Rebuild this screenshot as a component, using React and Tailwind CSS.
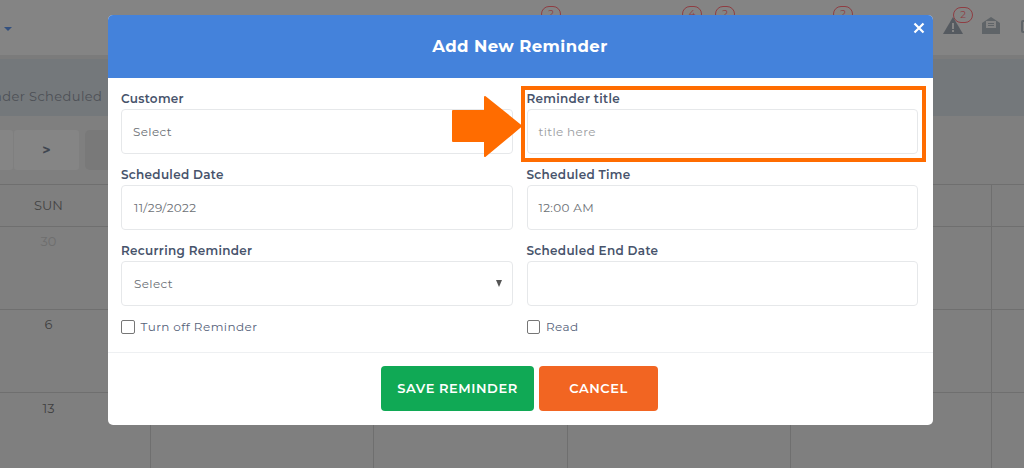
const font = { fontFamily: "Montserrat, Inter, 'Noto Sans', sans-serif" };

const Badge = ({ className, n }) => (
  <span
    className={`absolute w-[20px] h-[16px] rounded-full border border-[#8f3d42] text-[10px] leading-[14px] text-center text-[#8f3d42] ${className}`}
  >
    {n}
  </span>
);

const Field = ({ label, value, placeholder, caret, inset }) => (
  <div className="flex flex-col">
    <label className="text-[12px] leading-[16px] h-[16px] mt-[1px] font-semibold tracking-[0.3px] text-[#47536b] mb-[2px]">{label}</label>
    <div className={`relative h-[45px] border border-[#e6e8ea] rounded-[4px] bg-white flex items-center pr-[11px] text-[12px] tracking-[0.35px] text-[#6b6f75] ${inset ? "pl-[12px]" : "pl-[11px]"}`}>
      {placeholder ? <span className="text-[#9a9da1]">{placeholder}</span> : value}
      {caret && <span className="absolute right-[10px] top-[18px] w-0 h-0 border-x-[3.5px] border-x-transparent border-t-[7px] border-t-[#555]" />}
    </div>
  </div>
);

const Check = ({ label }) => (
  <div className="flex items-center gap-[6px] h-[14px] mt-[2px] text-[12px] tracking-[0.42px] text-[#56627a]">
    <span className="w-[13.5px] h-[14px] border border-[#767676] rounded-[2px] bg-white" />
    {label}
  </div>
);

const Row = ({ className, children }) => (
  <div className={`grid grid-cols-[151px_223px_194px_223px_201px_32px] border-b border-[#6f6f6f] text-[13px] ${className}`}>
    {children}
    <div className="border-r border-[#6f6f6f]" />
    <div className="border-r border-[#6f6f6f]" />
    <div className="border-r border-[#6f6f6f]" />
    <div className="border-r border-[#6f6f6f]" />
    <div />
  </div>
);

export default function App() {
  return (
    <div className="relative w-[1024px] h-[468px] overflow-hidden bg-[#7f7f7f]" style={font}>
      {/* page behind the modal */}
      <div className="relative h-[59px] bg-[#848484] border-b-[4px] border-[#7b7b7b]">
        <span className="absolute left-[4px] top-[27px] w-0 h-0 border-x-[4px] border-x-transparent border-t-[4px] border-t-[#33507f]" />
        <Badge className="left-[541px] top-[6px]" n="2" />
        <Badge className="left-[682px] top-[6px]" n="4" />
        <Badge className="left-[715px] top-[6px]" n="2" />
        <Badge className="left-[833px] top-[6px]" n="2" />
        <Badge className="left-[953px] top-[7px]" n="2" />
        <svg className="absolute left-[943px] top-[17px]" width="20" height="17" viewBox="0 0 20 17">
          <path d="M10 0 L20 17 H0 Z" fill="#555a60" />
          <rect x="9" y="6" width="2" height="6" fill="#848484" />
          <rect x="9" y="13" width="2" height="2" fill="#848484" />
        </svg>
        <svg className="absolute left-[982px] top-[17px]" width="18" height="17" viewBox="0 0 18 17">
          <path d="M0 6 L9 0 L18 6 V17 H0 Z" fill="#5f6468" />
          <rect x="4" y="4" width="10" height="7" fill="#848484" />
          <rect x="6" y="6" width="6" height="1" fill="#5f6468" />
          <rect x="6" y="8" width="6" height="1" fill="#5f6468" />
        </svg>
        <span className="absolute left-[1021px] top-[20px] w-[10px] h-[13px] border-2 border-[#5f6468] rounded-[2px]" />
      </div>
      <div className="h-[57px] bg-[#74787b] flex items-center text-[13px] tracking-[0.4px] text-[#4d5056] pt-[19px]">
        <span className="whitespace-nowrap -ml-[7px]">nder Scheduled</span>
      </div>
      <div className="h-[69px] flex items-start pt-[14px] border-b border-[#6f6f6f]">
        <div className="w-[13px] h-[40px] mr-[1px] bg-[#858585] rounded-r-[3px]" />
        <div className="w-[65px] h-[40px] mr-[6px] bg-[#858585] rounded-[3px] flex items-center justify-center text-[14px] font-bold text-[#3f4650]">&gt;</div>
        <div className="w-[40px] h-[40px] bg-[#797979] rounded-[5px]" />
      </div>
      <Row className="h-[42px] text-[#444]">
        <div className="flex items-center justify-center pr-[53px] border-r border-[#6f6f6f]">SUN</div>
      </Row>
      {[
        { h: "h-[83px]", n: "30", c: "text-[#6e6e6e] pt-[5px]" },
        { h: "h-[83px]", n: "6", c: "text-[#3f3f3f] pt-[5px]" },
        { h: "h-[76px]", n: "13", c: "text-[#3f3f3f] pt-[6px]" },
      ].map((row) => (
        <Row key={row.n} className={row.h}>
          <div className={`text-center pr-[53px] border-r border-[#6f6f6f] ${row.c}`}>{row.n}</div>
        </Row>
      ))}

      {/* modal */}
      <div className="absolute left-[108px] top-[15px] w-[825px] h-[410px] bg-white rounded-[5px] overflow-hidden flex flex-col">
        <div className="relative h-[63px] shrink-0 bg-[#4482db] flex items-center justify-center text-white text-[16.5px] font-bold tracking-[0.4px] pr-[1px]">
          Add New Reminder
          <span className="absolute right-[8px] top-[7px]">
            <svg width="12" height="12" viewBox="0 0 12 12">
              <path d="M1.5 1.5 L10.5 10.5 M10.5 1.5 L1.5 10.5" stroke="#fff" strokeWidth="2.2" />
            </svg>
          </span>
        </div>
        <div className="grid grid-cols-[392px_391px] gap-x-[13.5px] gap-y-[12px] px-[13px] pt-[12px] h-[275px] shrink-0 content-start border-b border-[#eef0f2]">
          <Field label="Customer" value="Select" />
          <Field label="Reminder title" placeholder="title here" />
          <Field label="Scheduled Date" value="11/29/2022" inset />
          <Field label="Scheduled Time" value="12:00 AM" />
          <Field label="Recurring Reminder" value="Select" caret inset />
          <Field label="Scheduled End Date" value="" />
          <Check label="Turn off Reminder" />
          <Check label="Read" />
        </div>
        <div className="flex-1 flex items-start justify-center gap-[5px] pt-[13px] pr-[2px] text-white text-[13px] font-semibold tracking-[0.55px]">
          <div className="w-[153px] h-[45px] pt-[1px] bg-[#10a955] rounded-[4px] flex items-center justify-center">SAVE REMINDER</div>
          <div className="w-[119px] h-[45px] pt-[1px] bg-[#f26522] rounded-[4px] flex items-center justify-center">CANCEL</div>
        </div>
      </div>

      {/* orange callout */}
      <div className="absolute left-[521px] top-[86px] w-[405px] h-[76px] border-[4px] border-[#ff6c00]" />
      <svg className="absolute left-[452px] top-[96px]" width="70" height="61" viewBox="0 0 70 61">
        <path d="M1 15 H33 V1 L69 30 L33 60 V45 H1 Z" fill="#ff6c00" stroke="#ff6c00" strokeLinejoin="round" strokeWidth="2" />
      </svg>
    </div>
  );
}
